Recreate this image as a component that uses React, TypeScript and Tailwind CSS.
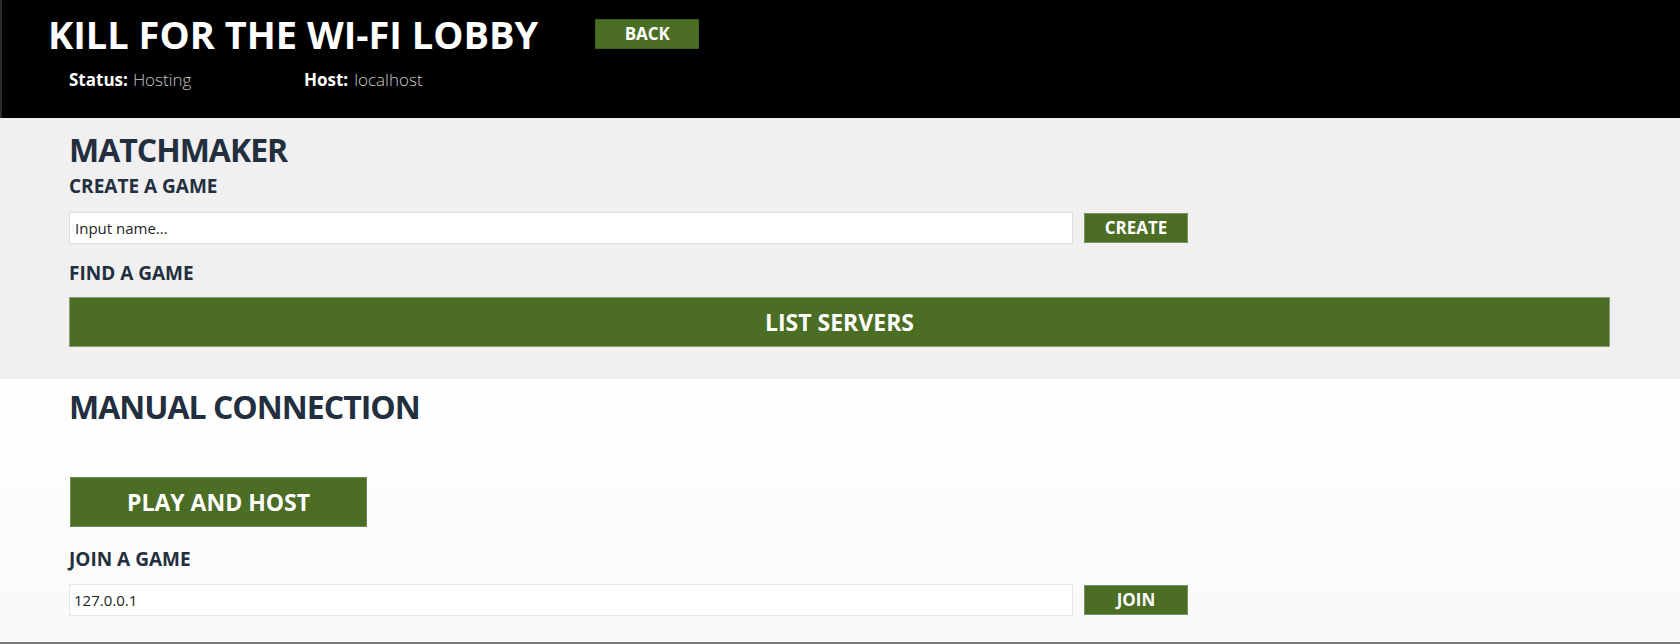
export default function App() {
  return (
    <div className="flex h-[644px] w-full flex-col overflow-hidden font-['Open_Sans',sans-serif]">
      {/* header */}
      <header className="h-[118px] shrink-0 border-l-2 border-[#2b2b2b] bg-black pl-[46px] pt-[15px]">
        <div className="flex items-start">
          <h1 className="text-[38px] font-bold leading-none text-white">KILL FOR THE WI-FI LOBBY</h1>
          <button className="ml-[57px] mt-[4px] h-[30px] w-[104px] border border-[#3f5c1f] bg-[#4b6d24] text-[17px] font-bold text-white">
            BACK
          </button>
        </div>
        <div className="mt-[18px] flex pl-[21px] text-[17px] leading-none">
          <div className="w-[235px]">
            <span className="font-bold text-white">Status:</span>
            <span className="ml-[5px] font-light text-[#c8c8c8]">Hosting</span>
          </div>
          <div>
            <span className="font-bold text-white">Host:</span>
            <span className="ml-[6px] font-light text-[#c8c8c8]">localhost</span>
          </div>
        </div>
      </header>

      {/* matchmaker */}
      <section className="h-[261px] shrink-0 bg-[#f0f0f0] pl-[69px] pr-[70px] pt-[16px] text-[#232f3e]">
        <h2 className="text-[32px] font-bold leading-none tracking-[-1px]">MATCHMAKER</h2>
        <h3 className="mt-[11px] text-[19px] font-bold leading-none">CREATE A GAME</h3>
        <div className="mt-[16px] flex items-center gap-[11px]">
          <input
            className="h-[32px] w-[1004px] border border-[#dedede] bg-white px-[5px] text-[15px] text-[#222] outline-none placeholder:text-[#222]"
            placeholder="Input name..."
          />
          <button className="h-[30px] w-[104px] border border-[#7c9266] bg-[#4b6d24] text-[17px] font-bold text-white">
            CREATE
          </button>
        </div>
        <h3 className="mt-[20px] text-[19px] font-bold leading-none">FIND A GAME</h3>
        <button className="mt-[14px] h-[50px] w-[1541px] border border-[#8a9d78] bg-[#4b6d24] text-[23px] font-bold text-white">
          LIST SERVERS
        </button>
      </section>

      {/* manual connection */}
      <section className="flex-1 bg-gradient-to-b from-white to-[#f9f9f9] pl-[69px] pt-[12px] text-[#232f3e]">
        <h2 className="text-[32px] font-bold leading-none tracking-[-1px]">MANUAL CONNECTION</h2>
        <button className="ml-[1px] mt-[54px] h-[50px] w-[297px] border border-[#6f8a55] bg-[#4b6d24] text-[23px] font-bold text-white">
          PLAY AND HOST
        </button>
        <h3 className="mt-[23px] text-[19px] font-bold leading-none">JOIN A GAME</h3>
        <div className="mt-[15px] flex items-center gap-[11px]">
          <input
            className="h-[32px] w-[1004px] border border-[#e6e6e6] bg-white px-[4px] text-[15px] text-[#222] outline-none"
            defaultValue="127.0.0.1"
          />
          <button className="h-[30px] w-[104px] border border-[#7c9266] bg-[#4b6d24] text-[17px] font-bold text-white">
            JOIN
          </button>
        </div>
      </section>
      <div className="h-[2px] shrink-0 bg-[#7a7a7a]" />
    </div>
  )
}
